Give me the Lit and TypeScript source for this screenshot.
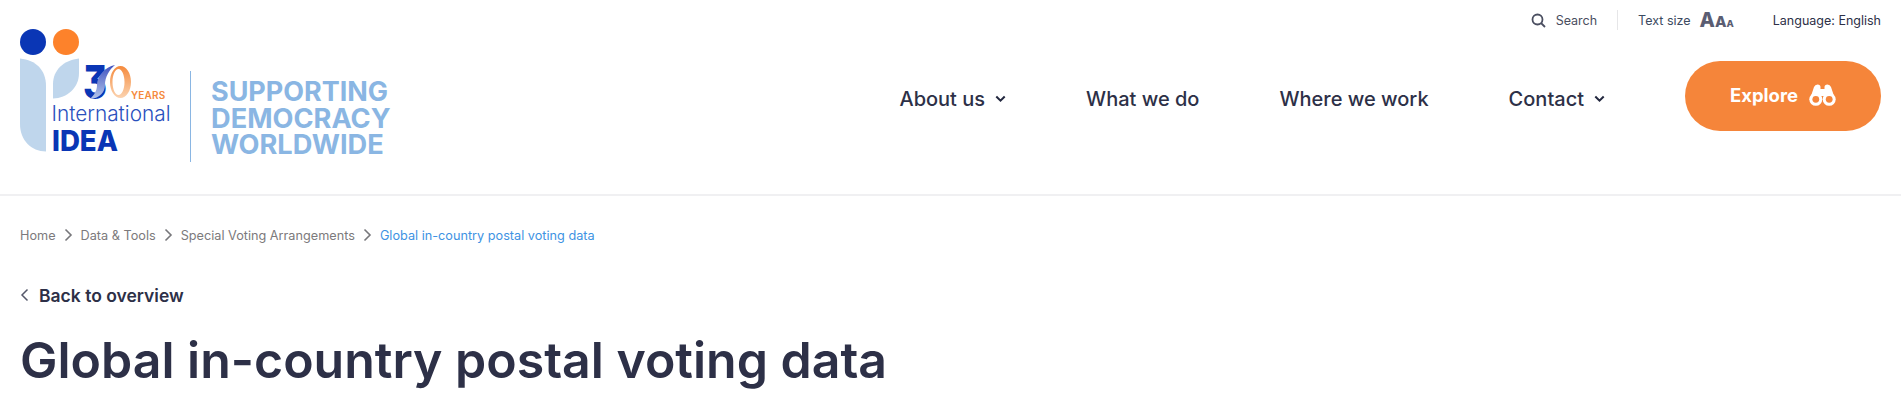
import { LitElement, html, css, svg } from "lit";
import { customElement } from "lit/decorators.js";

const chevDown = html`<svg class="chev" width="11" height="8" viewBox="0 0 11 8"><path d="M1.300 1.500 5.500 5.700l4.200-4.200" fill="none" stroke="#23283f" stroke-width="2"/></svg>`;
const crumbSep = html`<svg class="sep" width="9" height="14" viewBox="0 0 9 14"><path d="M1.500 1.500 7 7l-5.500 5.500" fill="none" stroke="#77777b" stroke-width="1.600"/></svg>`;

const logo = svg`
  <defs>
    <linearGradient id="zero" x1="0" y1="0" x2="0" y2="1"><stop offset="0" stop-color="#f58a3c"/><stop offset="1" stop-color="#fbd3b0"/></linearGradient>
    <linearGradient id="swoosh" x1="0" y1="0" x2="0" y2="1"><stop offset="0" stop-color="#3f51c0"/><stop offset="1" stop-color="#b4c6ea"/></linearGradient>
  </defs>
  <circle cx="33" cy="32" r="13" fill="#0a36b5"/>
  <circle cx="66" cy="32" r="13" fill="#fd822b"/>
  <path d="M20 48.500C36 50 46 60 46 76V141.500C31 141.500 20 130 20 114Z" fill="#bfd6ec"/>
  <path d="M79 48.500V63C79 78 67 88 53 88.500V74C53 60 64 50 79 48.500Z" fill="#bfd6ec"/>
  <text class="thirty" x="83" y="89" fill="#0a36b5" textLength="24" lengthAdjust="spacingAndGlyphs">3</text>
  <path fill-rule="evenodd" d="M120.500 56C126.300 56 131 63.200 131 72S126.300 88 120.500 88 110 80.800 110 72 114.700 56 120.500 56ZM118.500 59C115.200 59 112.500 64.800 112.500 72S115.200 85 118.500 85 124.500 79.200 124.500 72 121.800 59 118.500 59Z" fill="url(#zero)"/>
  <path d="M115 55C105 57 97 66 97 75C97 81 94 85 90 89C100 88 105 82 105 75C105 67 109 60 115 55Z" fill="url(#swoosh)"/>
  <text class="years" x="131" y="88.500" fill="#f58a3c">YEARS</text>
  <text class="intl" x="51.500" y="111" fill="#2a50bd" textLength="119" lengthAdjust="spacingAndGlyphs">International</text>
  <text class="idea" x="52" y="141" fill="#0a36b5" textLength="66" lengthAdjust="spacingAndGlyphs">IDEA</text>
  <rect x="190" y="61" width="1" height="91" fill="#8ab6e3"/>
  <g class="tag" fill="#8ab6e3">
    <text x="211" y="90.700" textLength="177" lengthAdjust="spacingAndGlyphs">SUPPORTING</text>
    <text x="211" y="117.500">DEMOCRACY</text>
    <text x="211" y="144">WORLDWIDE</text>
  </g>
`;

@customElement("app-root")
export class AppRoot extends LitElement {
  static styles = css`
    :host { display: block; background: #fff; font-family: Inter, "Noto Sans", sans-serif; color: #2d3047; min-height: 414px; overflow: hidden; }
    header { border-bottom: 2px solid #f0f0f2; height: 196px; box-sizing: border-box; padding: 0 20px; display: grid; grid-template-columns: 1fr; grid-template-rows: 40px 1fr; }
    .top { display: flex; justify-content: flex-end; align-items: center; font-size: 12.500px; color: #3c4257; height: 40px; }
    .top .search { display: flex; align-items: center; gap: 10px; padding-right: 20px; border-right: 1px solid #e6e6e8; height: 20px; color: #4a4e60; }
    .top .size { display: flex; align-items: center; margin-left: 20px; gap: 9px; color: #3b4a60; }
    .aaa { display: flex; align-items: baseline; font-weight: 800; color: #5a5d72; line-height: 1; }
    .aaa .a1 { font-size: 20px; }
    .aaa .a2 { font-size: 15px; }
    .aaa .a3 { font-size: 9.500px; }
    .top .lang { margin-left: 39px; color: #2d3047; }
    .main { display: flex; align-items: flex-start; justify-content: space-between; }
    .logo { display: block; margin: -30px 0 0 -20px; flex: none; }
    .thirty { font: 800 46px Inter, sans-serif; font-feature-settings: "cv09"; }
    .years { font: 600 10px Inter, sans-serif; letter-spacing: .2px; }
    .intl { font: 300 21px Inter, sans-serif; }
    .idea { font: 800 28.400px Inter, sans-serif; }
    .tag text { font: 700 27.200px Inter, sans-serif; }
    .right { display: flex; align-items: center; margin-top: 21px; }
    nav { display: flex; align-items: center; font-size: 20px; font-weight: 500; color: #2d3047; padding-top: 5px; }
    nav a { display: flex; align-items: center; gap: 10px; white-space: nowrap; margin-right: 80px; }
    .explore { display: flex; align-items: center; justify-content: center; gap: 11px; width: 196px; height: 70px; background: #f5853a; color: #fff; border-radius: 35px; font-size: 18.500px; font-weight: 700; padding-bottom: 2px; box-sizing: border-box; }
    .crumbs { display: flex; align-items: center; font-size: 12.700px; color: #7c7a7c; padding: 30px 20px 0; height: 18px; }
    .crumbs .sep { margin: 0 8px; }
    .crumbs .cur { color: #3e93e3; }
    .back { display: flex; align-items: center; gap: 10px; padding: 39px 20px 0; font-size: 17.500px; font-weight: 600; color: #2d3047; height: 24px; }
    h1 { margin: 0; padding: 22px 20px 0; font-size: 50px; font-weight: 600; line-height: 63px; color: #2d3047; }
  `;

  render() {
    return html`
      <header>
        <div class="top">
          <div class="search">
            <svg width="15" height="15" viewBox="0 0 15 15"><circle cx="6.500" cy="6.500" r="5" fill="none" stroke="#4a4e60" stroke-width="1.800"/><path d="m10 10 4 4" stroke="#4a4e60" stroke-width="1.800"/></svg>
            <span>Search</span>
          </div>
          <div class="size">
            <span>Text size</span>
            <span class="aaa"><span class="a1">A</span><span class="a2">A</span><span class="a3">A</span></span>
          </div>
          <div class="lang">Language: English</div>
        </div>
        <div class="main">
          <svg class="logo" width="400" height="160" viewBox="0 0 400 160">${logo}</svg>
          <div class="right">
            <nav>
              <a>About us ${chevDown}</a>
              <a>What we do</a>
              <a>Where we work</a>
              <a>Contact ${chevDown}</a>
            </nav>
            <div class="explore">
              <span>Explore</span>
              <svg width="27" height="22" viewBox="0 0 27 22" fill="#fff">
                <path d="M2 12 5 3Q6 .5 8.500 .5 11.500 .5 11.500 3V5H15.500V3Q15.500 .5 18.500 .5 21 .5 22 3L25 12Z"/>
                <circle cx="6.800" cy="15.300" r="6.500"/><circle cx="20.200" cy="15.300" r="6.500"/>
                <circle cx="6.800" cy="15.300" r="3.400" fill="#f5853a"/><circle cx="20.200" cy="15.300" r="3.400" fill="#f5853a"/>
              </svg>
            </div>
          </div>
        </div>
      </header>
      <div class="crumbs">
        <span>Home</span>${crumbSep}<span>Data &amp; Tools</span>${crumbSep}<span>Special Voting Arrangements</span>${crumbSep}<span class="cur">Global in-country postal voting data</span>
      </div>
      <div class="back">
        <svg width="9" height="14" viewBox="0 0 9 14"><path d="M7.500 1.500 2 7l5.500 5.500" fill="none" stroke="#55586a" stroke-width="1.500"/></svg>
        <span>Back to overview</span>
      </div>
      <h1>Global in-country postal voting data</h1>
    `;
  }
}
